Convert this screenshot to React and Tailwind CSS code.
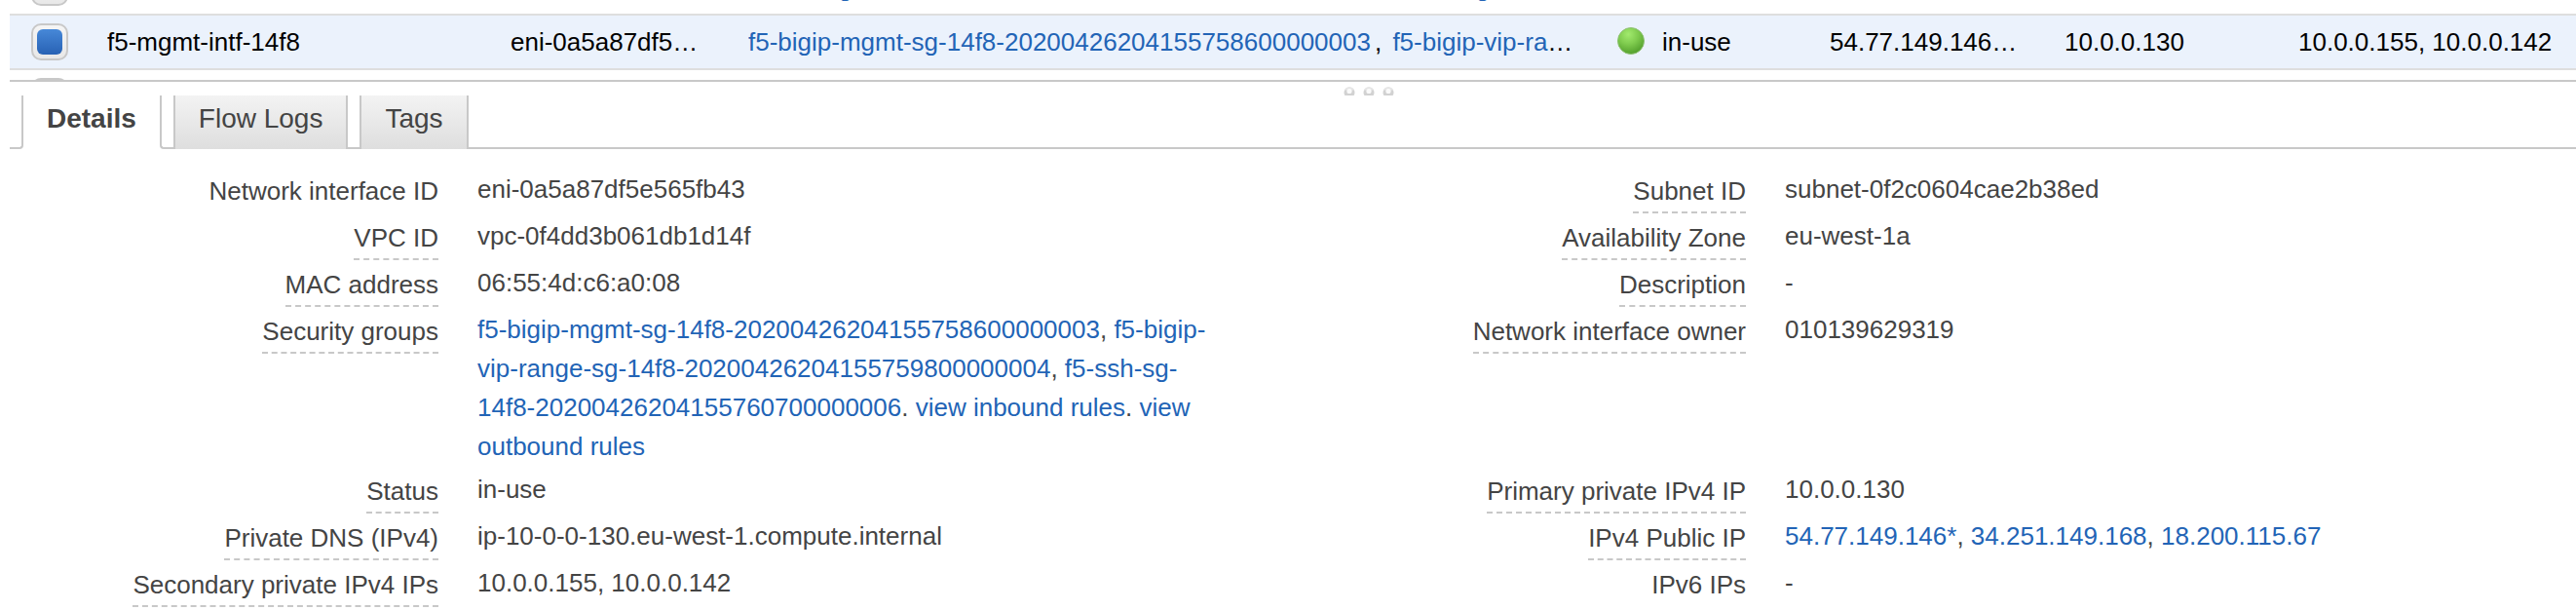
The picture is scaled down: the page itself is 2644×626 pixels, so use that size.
import React from "react";

const SG_MGMT = "f5-bigip-mgmt-sg-14f8-20200426204155758600000003";
const SG_VIP = "f5-bigip-vip-range-sg-14f8-20200426204155759800000004";
const SG_SSH = "f5-ssh-sg-14f8-20200426204155760700000006";

function Link({ children, className = "" }) {
  return (
    <a href="#" className={"text-[#2264b6] " + className}>
      {children}
    </a>
  );
}

function RowCheckbox({ label, checked = false }) {
  return (
    <input
      type="checkbox"
      aria-label={label}
      defaultChecked={checked}
      className="ml-3 grid size-[38px] appearance-none place-items-center rounded-[10px] border-2 border-[#c8c8c8] bg-linear-to-b from-[#f5f5f5] to-[#e8e8e8] before:size-[26px] before:rounded-md before:content-[''] checked:before:bg-linear-to-b checked:before:from-[#4788d8] checked:before:to-[#2862b4]"
    />
  );
}

function StatusDot() {
  return (
    <svg viewBox="0 0 28 30" className="h-[30px] w-7 shrink-0" aria-hidden="true">
      <defs>
        <radialGradient id="dot" cx="0.4" cy="0.25" r="0.75">
          <stop offset="0" stopColor="#a2ea6e" />
          <stop offset="0.5" stopColor="#7fcb4e" />
          <stop offset="1" stopColor="#53a02d" />
        </radialGradient>
      </defs>
      <circle cx="14" cy="14" r="13.5" fill="url(#dot)" stroke="#8cc070" strokeWidth="1" />
    </svg>
  );
}

function Cell({ children, last = false }) {
  return (
    <td className={"h-14 truncate border-b-2 border-[#dedede] py-0 pl-2.5 " + (last ? "pr-0" : "pr-8")}>
      {children}
    </td>
  );
}

function InterfaceRow({ item, selected = false }) {
  return (
    <tr className={selected ? "bg-[#ebf2fc]" : "bg-white"}>
      <Cell>
        <RowCheckbox label={"Select " + (item.name || "network interface")} checked={selected} />
      </Cell>
      <Cell>{item.name}</Cell>
      <Cell>{item.eni}</Cell>
      <Cell>
        {item.groups.map((group, i) => (
          <React.Fragment key={group}>
            {i > 0 && ", "}
            <Link className="mx-1">{group}</Link>
          </React.Fragment>
        ))}
      </Cell>
      <Cell>
        <div className="flex items-center gap-[18px]">
          <StatusDot />
          {item.status}
        </div>
      </Cell>
      <Cell>{item.publicIp}</Cell>
      <Cell>{item.privateIp}</Cell>
      <Cell last>{item.secondary}</Cell>
    </tr>
  );
}

const previous = { groups: [SG_SSH, "f5-external-lb-sg"] };

const current = {
  name: "f5-mgmt-intf-14f8",
  eni: "eni-0a5a87df5e565fb43",
  groups: [SG_MGMT, SG_VIP],
  status: "in-use",
  publicIp: "54.77.149.146*, 34.251.149.168",
  privateIp: "10.0.0.130",
  secondary: "10.0.0.155, 10.0.0.142",
};

const next = { groups: [] };

function Term({ children, plain = false }) {
  return (
    <dt className="min-h-12 pt-0.5 text-right">
      <span className={"inline-block pb-px align-top " + (plain ? "" : "border-b-2 border-dashed border-[#c8c8c8]")}>
        {children}
      </span>
    </dt>
  );
}

function Value({ children }) {
  return <dd className="pb-1">{children}</dd>;
}

export default function App() {
  return (
    <main className="bg-white pl-2.5 font-['Liberation_Sans',Arial,sans-serif] text-[26px] leading-10 text-[#444]">
      <div className="h-[84px] overflow-hidden border-b-2 border-[#c8c8c8]">
        <table className="-mt-10 w-full table-fixed border-separate border-spacing-0 text-black">
          <colgroup>
            <col className="w-[90px]" />
            <col className="w-[414px]" />
            <col className="w-[240px]" />
            <col className="w-[896px]" />
            <col className="w-[218px]" />
            <col className="w-[241px]" />
            <col className="w-[240px]" />
            <col className="w-[295px]" />
          </colgroup>
          <tbody>
            <InterfaceRow item={previous} />
            <InterfaceRow item={current} selected />
            <InterfaceRow item={next} />
          </tbody>
        </table>
      </div>

      <div className="flex h-3.5 items-end justify-center pl-[156px]">
        <svg viewBox="0 0 52 9" className="h-[9px] w-[52px]" aria-hidden="true">
          {[6, 26, 46].map((x) => (
            <g key={x}>
              <circle cx={x} cy="6" r="5.5" fill="#d2d2d2" />
              <path d={`M${x - 5} 3.5a5.5 5.5 0 0 1 10 0z`} fill="#e6e6e6" />
              <circle cx={x} cy="4.5" r="2.6" fill="#fafafa" />
            </g>
          ))}
        </svg>
      </div>

      <div role="tablist" className="flex h-[55px] text-[28px] leading-[48px]">
        <div className="w-3.5 rounded-br-sm border-r-2 border-b-2 border-[#c8c8c8]" />
        <button role="tab" aria-selected="true" className="flex items-start px-6 font-bold">
          Details
        </button>
        <div className="w-3.5 rounded-bl-sm border-b-2 border-l-2 border-[#c8c8c8]" />
        <button
          role="tab"
          aria-selected="false"
          className="flex items-start border-x-2 border-[#c8c8c8] bg-linear-to-b from-[#f3f3f3] to-[#dedede] px-6"
        >
          Flow Logs
        </button>
        <div className="w-3 border-b-2 border-[#c8c8c8]" />
        <button
          role="tab"
          aria-selected="false"
          className="flex items-start border-x-2 border-[#c8c8c8] bg-linear-to-b from-[#f3f3f3] to-[#dedede] px-6"
        >
          Tags
        </button>
        <div className="flex-1 border-b-2 border-[#c8c8c8]" />
      </div>

      <dl className="grid grid-cols-[440fr_762fr_500fr_812fr] gap-x-10 pt-[21px]">
        <Term plain>Network interface ID</Term>
        <Value>eni-0a5a87df5e565fb43</Value>
        <Term>Subnet ID</Term>
        <Value>subnet-0f2c0604cae2b38ed</Value>

        <Term>VPC ID</Term>
        <Value>vpc-0f4dd3b061db1d14f</Value>
        <Term>Availability Zone</Term>
        <Value>eu-west-1a</Value>

        <Term>MAC address</Term>
        <Value>06:55:4d:c6:a0:08</Value>
        <Term>Description</Term>
        <Value>-</Value>

        <Term>Security groups</Term>
        <Value>
          <Link>{SG_MGMT}</Link>, <Link>{SG_VIP}</Link>,{" "}
          <Link>
            f5-ssh-sg-
            <wbr />
            14f8-20200426204155760700000006
          </Link>
          . <Link>view inbound rules</Link>. <Link>view outbound rules</Link>
        </Value>
        <Term>Network interface owner</Term>
        <Value>010139629319</Value>

        <Term>Status</Term>
        <Value>in-use</Value>
        <Term>Primary private IPv4 IP</Term>
        <Value>10.0.0.130</Value>

        <Term>Private DNS (IPv4)</Term>
        <Value>ip-10-0-0-130.eu-west-1.compute.internal</Value>
        <Term>IPv4 Public IP</Term>
        <Value>
          <Link>54.77.149.146*</Link>, <Link>34.251.149.168</Link>, <Link>18.200.115.67</Link>
        </Value>

        <Term>Secondary private IPv4 IPs</Term>
        <Value>10.0.0.155, 10.0.0.142</Value>
        <Term plain>IPv6 IPs</Term>
        <Value>-</Value>
      </dl>
    </main>
  );
}
